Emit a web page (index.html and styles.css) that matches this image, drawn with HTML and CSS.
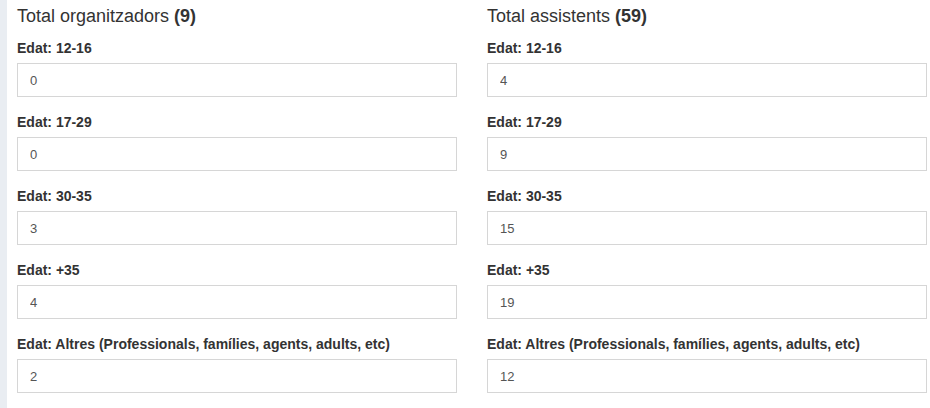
FILE: index.html
```html
<!DOCTYPE html>
<html lang="ca">
<head>
    <meta charset="utf-8">
    <title>Participants</title>
    <link rel="stylesheet" href="styles.css">
</head>
<body>
    <div class="page">
        <div class="col">
            <h3 class="total">Total organitzadors <b>(9)</b></h3>
            <div class="field">
                <label class="field-label">Edat: 12-16</label>
                <input class="field-input" type="text" value="0" readonly>
            </div>
            <div class="field">
                <label class="field-label">Edat: 17-29</label>
                <input class="field-input" type="text" value="0" readonly>
            </div>
            <div class="field">
                <label class="field-label">Edat: 30-35</label>
                <input class="field-input" type="text" value="3" readonly>
            </div>
            <div class="field">
                <label class="field-label">Edat: +35</label>
                <input class="field-input" type="text" value="4" readonly>
            </div>
            <div class="field">
                <label class="field-label">Edat: Altres (Professionals, famílies, agents, adults, etc)</label>
                <input class="field-input" type="text" value="2" readonly>
            </div>
        </div>

        <div class="col">
            <h3 class="total">Total assistents <b>(59)</b></h3>
            <div class="field">
                <label class="field-label">Edat: 12-16</label>
                <input class="field-input" type="text" value="4" readonly>
            </div>
            <div class="field">
                <label class="field-label">Edat: 17-29</label>
                <input class="field-input" type="text" value="9" readonly>
            </div>
            <div class="field">
                <label class="field-label">Edat: 30-35</label>
                <input class="field-input" type="text" value="15" readonly>
            </div>
            <div class="field">
                <label class="field-label">Edat: +35</label>
                <input class="field-input" type="text" value="19" readonly>
            </div>
            <div class="field">
                <label class="field-label">Edat: Altres (Professionals, famílies, agents, adults, etc)</label>
                <input class="field-input" type="text" value="12" readonly>
            </div>
        </div>
    </div>
</body>
</html>
```

FILE: styles.css
```css
* {
    margin: 0;
    padding: 0;
    box-sizing: border-box;
}

body {
    font-family: "Liberation Sans", Arial, sans-serif;
    color: #333;
    background: #fff;
}

.page {
    display: grid;
    grid-template-columns: 440px 440px;
    column-gap: 30px;
    border-left: 7px solid #e9edf2;
    padding-left: 10px;
    padding-top: 6px;
    min-height: 408px;
}

.total {
    font-size: 18px;
    font-weight: normal;
    line-height: 20px;
    color: #333;
}

.total b {
    font-weight: bold;
}

.field {
    display: flex;
    flex-direction: column;
    margin-top: 12px;
}

.field + .field {
    margin-top: 15px;
}

.field-label {
    font-size: 14px;
    font-weight: bold;
    line-height: 20px;
    color: #333;
    margin-bottom: 5px;
}

.field-input {
    height: 34px;
    width: 100%;
    border: 1px solid #d6d6d6;
    padding: 0 12px;
    font-family: "Liberation Sans", Arial, sans-serif;
    font-size: 13px;
    color: #555;
    background: #fff;
    outline: none;
}
```
